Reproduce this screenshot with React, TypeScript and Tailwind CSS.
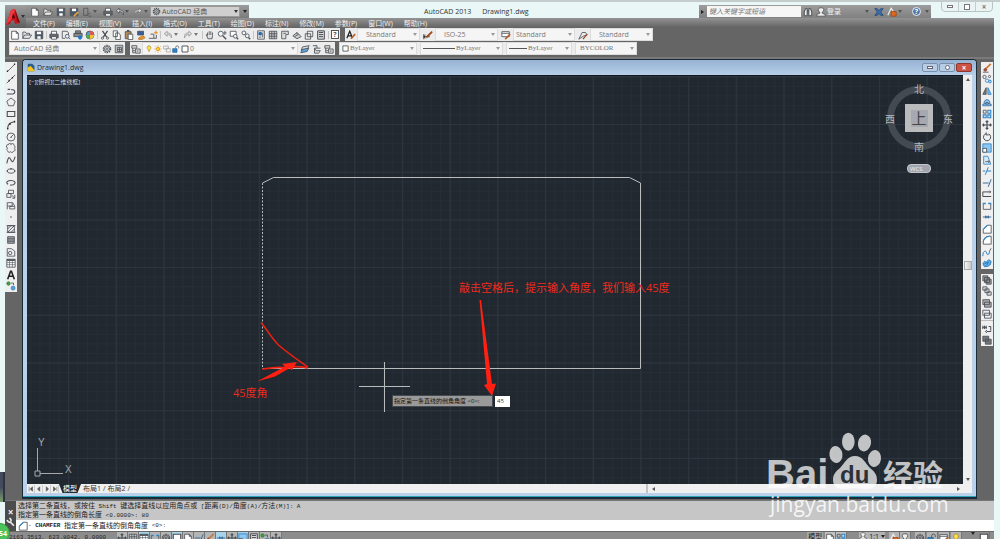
import type { ReactNode } from "react";
import clsx from "clsx";

// Every glyph is drawn on a 12x12 grid and inherits the stroke of <Glyph>.
const GLYPHS: Record<string, ReactNode> = {
  new: <path d="M2 1.5h5.5L10 4v7H2zM7.5 1.5V4H10" fill="#fff" />,
  open: <path d="M1 10V2.5h3l1 1.5h4v2M1 10l2-4h8.500l-2.500 4z" fill="#e8e8e8" />,
  save: (
    <>
      <path d="M1.500 1.500h9v9h-9z" fill="#4b5868" />
      <path d="M3.500 2h5v3h-5zM4 7.500h4v3H4z" fill="#fff" stroke="none" />
    </>
  ),
  saveas: (
    <>
      <path d="M1.500 1.500h9v9h-9z" fill="#4b5868" />
      <path d="M3.500 2h5v3h-5z" fill="#fff" stroke="none" />
      <path d="M6 11l5-5" stroke="#e8a33a" strokeWidth="2" />
    </>
  ),
  export: <path d="M2 1.500h5V10H2zM6 10l4-3M8 11h3" />,
  print: (
    <>
      <path d="M1 5h10v4.500H1z" fill="#666" />
      <path d="M3 1.500h6V5H3zM3 8h6v3H3z" fill="#fff" />
    </>
  ),
  preview: (
    <>
      <path d="M1.500 1.500h6l1.500 2V6M1.500 1.500V10H5" />
      <circle cx="7.500" cy="7.500" r="2.300" fill="#dfefff" />
      <path d="M9 9l2 2" />
    </>
  ),
  publish: (
    <>
      <path d="M3 1h6v3H3zM1 4h10v4H1z" fill="#888" />
      <circle cx="8.500" cy="9" r="2" fill="#1976d2" stroke="#1976d2" />
    </>
  ),
  globe: (
    <>
      <circle cx="6" cy="6" r="4.800" fill="#4aa3d8" />
      <path d="M6 6V1.200A4.800 4.800 0 0 1 10.800 6z" fill="#e2574c" stroke="none" />
      <path d="M6 6h4.800A4.800 4.800 0 0 1 6 10.800z" fill="#f2c037" stroke="none" />
      <path d="M6 6v4.800A4.800 4.800 0 0 1 1.200 6z" fill="#58a84c" stroke="none" />
    </>
  ),
  cut: (
    <>
      <path d="M3 1l5 7.500M9 1L4 8.500" strokeWidth="1.500" />
      <circle cx="3" cy="9.700" r="1.300" />
      <circle cx="9" cy="9.700" r="1.300" />
    </>
  ),
  copy: <path d="M1.500 1h5v7h-5zM4.500 3.500H8L10 6v5.500H4.500z" fill="#fff" />,
  paste: (
    <>
      <path d="M1.500 2h7v8.500h-7z" fill="#b58a5c" />
      <path d="M5 5h5.500v6.500H5z" fill="#fff" />
      <path d="M3.500 1h3" strokeWidth="2" />
    </>
  ),
  match: (
    <>
      <path d="M2 1.500h7V6H2z" fill="#3b5f9c" />
      <path d="M3 11c0-3 3-2 5-4l3 2c-2 2-5 3-8 2z" fill="#e29a3a" stroke="#b87020" />
    </>
  ),
  block: (
    <>
      <path d="M1 10h6V5H3M7 10h3V6" />
      <path d="M9.500 1v4M7.500 3h4" stroke="#f09020" strokeWidth="1.500" />
    </>
  ),
  undo: <path d="M5 1.500L1.500 4.500 5 7.500V5.500c3 0 4.500 1 5 4 1-4-1-6-5-6z" fill="#ddd" />,
  redo: <path d="M7 1.500l3.500 3L7 7.500V5.500c-3 0-4.500 1-5 4-1-4 1-6 5-6z" fill="#ddd" />,
  pan: <path d="M3 6.500V3M5 6V1.500M7 6V1.500M9 6.500V3M3 6.500L1.500 5.500 3.500 10.500h5L9 6.500" fill="#ddd" />,
  zoom: (
    <>
      <circle cx="4.500" cy="4.500" r="3" fill="#eef5fb" />
      <path d="M7 7l4 4" strokeWidth="1.600" />
      <path d="M9.500 1v5M7.500 3.500h4" />
    </>
  ),
  zoomwin: (
    <>
      <path d="M1.500 1.500h7v6h-7z" fill="#fff" />
      <circle cx="7.500" cy="7.500" r="2.200" fill="#eef5fb" />
      <path d="M9 9l2 2" strokeWidth="1.600" />
    </>
  ),
  zoomprev: (
    <>
      <circle cx="3.500" cy="3.500" r="2.300" fill="#eef5fb" />
      <circle cx="7.500" cy="7" r="2.300" fill="#eef5fb" />
      <path d="M9 9l2 2" strokeWidth="1.600" />
    </>
  ),
  props: (
    <>
      <path d="M2 1h8v10H2z" fill="#eee" />
      <path d="M3.500 3h3v3h-3z" fill="#2b67ad" stroke="#2b67ad" />
      <path d="M8 3v6M3.500 8.500h3" />
    </>
  ),
  palette: <path d="M1.500 1.500h9v9h-9zM1.500 4.500h9M1.500 7.500h9M4.500 1.500v9M7.500 1.500v9" fill="#ccc" />,
  tool: <path d="M2 1.500h8v4H7v5H4M2 1.500v9h2M4 4h3" fill="#ddd" />,
  sheet: <path d="M1 7l5-4 5 5-5 2.500zM3 8l5-3M6 3v2" fill="#ccc" />,
  markup: <path d="M4 1.500h6.500V8H4zM1.500 4.500h6.500V11H1.500z" fill="#eee" />,
  calc: <path d="M2 1h8v10H2zM3.500 3h5M3.500 5.500h5M3.500 8h5" fill="#ddd" strokeWidth="1.200" />,
  gear: (
    <>
      <circle cx="6" cy="6" r="4.300" strokeWidth="1.600" strokeDasharray="1.700 1" />
      <circle cx="6" cy="6" r="3" />
      <circle cx="6" cy="6" r="1.200" />
    </>
  ),
  wsave: <path d="M1.500 1.500h9v9h-9zM4 4h5v5H4zM4 6.500h5M6.500 4v5" fill="#ccc" />,
  layers: <path d="M1 2h6v3H1zM2 5v3h3M2 8v2.500h3M5.500 6h5.500v5H5.500zM7 8.500h2" fill="#ddd" />,
  bulb: <path d="M6 1a3 3 0 0 0-1.500 5.500V8h3V6.500A3 3 0 0 0 6 1zM5 10h2" fill="#ffe14d" stroke="#a98a20" />,
  sun: (
    <>
      <circle cx="6" cy="6" r="2.500" fill="#ffd12e" stroke="#d28b10" />
      <path d="M6 .5v2M6 9.500v2M.5 6h2M9.500 6h2M2 2l1.500 1.500M8.500 8.500L10 10M10 2L8.500 3.500M2 10l1.500-1.500" stroke="#d28b10" />
    </>
  ),
  vpfreeze: <path d="M1 1.500h7V6H1zM5 5h6v5.500H5z" stroke="#999" />,
  lock: (
    <>
      <path d="M1 5.500h6.500V11H1z" fill="#2f83c6" stroke="#245f92" />
      <path d="M5.500 5V3.500a2 2 0 0 1 4.500 0V5" />
    </>
  ),
  swatch: <path d="M1.500 1.500h9v9h-9z" fill="#fff" strokeWidth="1.400" />,
  stack: (
    <>
      <path d="M3 3.500L11 2 9 6 1.500 7.500z" fill="#ddd" />
      <path d="M2.500 6.500L10.500 5l-2 4L1 10.500z" fill="#5aa5dd" />
    </>
  ),
  layprev: <path d="M1 2h5v3M3 5h7M3 5v6h5l2-3H5z" fill="#ddd" />,
  astyle: (
    <>
      <path d="M1 10L4.500 1.500 7.500 9M2.300 7h4" strokeWidth="1.500" stroke="#222" />
      <path d="M6 10.500L11 5" stroke="#b5612a" strokeWidth="2" />
    </>
  ),
  dim: (
    <>
      <path d="M1 5v6M1 8h7M3 6L1 8l2 2" stroke="#222" />
      <path d="M4 9l7-7" stroke="#9b4b22" strokeWidth="2.200" />
    </>
  ),
  tstyle: (
    <>
      <path d="M1 2h9v6H1zM1 4h9" fill="#fff" />
      <path d="M5 11l6-6" stroke="#b5612a" strokeWidth="2" />
    </>
  ),
  mleader: (
    <>
      <path d="M1 11l4-8h4l2 3-4 1z" fill="#eee" />
      <path d="M6 11l5-6" stroke="#9b4b22" strokeWidth="1.600" />
    </>
  ),
  line: (
    <>
      <path d="M2 10L10 2" />
      <path d="M1 10h1.500M9.500 1.500H11" strokeWidth="1.800" stroke="#222" />
    </>
  ),
  xline: (
    <>
      <path d="M1 11L11 1" />
      <path d="M3 8h1.500M7 4.500h1.500" strokeWidth="2" stroke="#222" />
    </>
  ),
  pline: <path d="M1 9.500h7a2.500 2.500 0 0 0 0-5H6M2 4h3" strokeWidth="1.300" />,
  polygon: <path d="M6 1.200l5 3.800-2 5.500H3L1 5z" />,
  rect: <path d="M1.500 3h9v6h-9zM.8 9h1.500M9.800 3h1.500" strokeWidth="1.300" />,
  arc: (
    <>
      <path d="M2 10.500C2 5.500 5 2.500 10 2" strokeWidth="1.300" />
      <path d="M1.300 10.500h1.500M4 5h1.500M9.500 2H11" strokeWidth="2" stroke="#222" />
    </>
  ),
  circle: (
    <>
      <circle cx="6" cy="6" r="4.800" />
      <path d="M6 6l3-3M5 6.500h2" />
    </>
  ),
  cloud: <path d="M3 2a1.500 1.500 0 0 1 3 0 1.700 1.700 0 0 1 3.500.8 2 2 0 0 1 .5 3.500 2 2 0 0 1-1 3.700 2 2 0 0 1-3.500.5A2 2 0 0 1 2 9.500 2 2 0 0 1 2 6 2 2 0 0 1 3 2z" />,
  spline: <path d="M1 10c2-10 3.500-7 5-4s3 3 5-4" strokeWidth="1.300" />,
  ellipse: (
    <>
      <ellipse cx="6" cy="6" rx="4.500" ry="2.700" />
      <path d="M5.300 3.300h1.500M.8 6h1.500M9.800 6h1.500" strokeWidth="2" />
    </>
  ),
  elarc: <path d="M2.500 7.500C-1 5 2 3 6 3s7 2.500 3 5l-3 .5M5 8.500h1.500" strokeWidth="1.300" />,
  insert: <path d="M3 1.500h6v4H3zM1 5.500h5V10H1zM7 7.500L10.500 11M10.500 7v4h-3" fill="#eee" />,
  make: <path d="M1.500 2h6v4h-6zM1.500 6v4M4.500 6.500h6v3h-6zM8 2l2.500 4" />,
  point: <circle cx="6" cy="6" r=".8" fill="#333" stroke="none" />,
  hatch: <path d="M2 2h8v8H2zM2 6l4-4M2 10l8-8M6 10l4-4M.8 2h10.500M.8 10h10.500" />,
  gradient: (
    <>
      <path d="M2 2h8v8H2z" fill="#b0b0b0" />
      <path d="M2 4h8M2 6h8M2 8h8" />
    </>
  ),
  region: (
    <>
      <path d="M1.500 2h5l4 3v6h-9z" />
      <circle cx="5" cy="7.200" r="2" />
    </>
  ),
  table: (
    <>
      <path d="M1 1.500h10v9.500H1z" fill="#fff" />
      <path d="M1 2.500h10" strokeWidth="2" />
      <path d="M1 5.500h10M1 8h10M4.300 3v8M7.700 3v8" strokeWidth=".7" />
    </>
  ),
  mtext: <path d="M2 11L5.500 1.500h1L10 11M3.500 7.500h5" strokeWidth="1.900" stroke="#222" />,
  addsel: (
    <>
      <circle cx="3" cy="3" r="2" fill="#48a148" stroke="#2f7a2f" />
      <circle cx="8.500" cy="8.500" r="2.300" fill="#5aa5dd" stroke="#2b77b5" />
      <path d="M6 2.500h3V5" />
    </>
  ),
  erase: (
    <>
      <path d="M5 6.500L10.500 1" stroke="#c57a35" strokeWidth="2" />
      <path d="M2 8.500l2-2.500 2 2-2 2z" fill="#d34a32" stroke="#7b2c1e" />
      <path d="M1 11h7" />
    </>
  ),
  mcopy: (
    <>
      <circle cx="3" cy="3.500" r="2" />
      <circle cx="9" cy="3" r="1.300" />
      <circle cx="6" cy="8" r="2" stroke="#2f83c6" />
      <circle cx="9.500" cy="9" r="1.700" stroke="#2f83c6" fill="#a5d3f5" />
    </>
  ),
  mirror: (
    <>
      <path d="M5 2v8H1z" fill="#777" />
      <path d="M7 2v8h4z" fill="#7ebcec" stroke="#2f83c6" />
    </>
  ),
  offset: (
    <>
      <path d="M1 10.500h10V8.500H9a3.500 3.500 0 1 0-6 0H1z" fill="#8cc6f1" stroke="#2f6fa8" />
      <path d="M4 8.500h4a2 2 0 1 0-4 0z" />
    </>
  ),
  array: (
    <>
      <path d="M1.500 1.500h3.500v3.500H1.500z" />
      <path d="M7 1.500h3.500v3.500H7zM1.500 7h3.500v3.500H1.500zM7 7h3.500v3.500H7z" stroke="#2f83c6" fill="#cfe6f8" strokeWidth="1.300" />
    </>
  ),
  move: <path d="M6 1v10M1 6h10M4.500 2.500L6 1l1.500 1.500M4.500 9.500L6 11l1.500-1.500M2.500 4.500L1 6l1.500 1.500M9.500 4.500L11 6 9.500 7.500" strokeWidth="1.400" />,
  rotate: <path d="M5 2a4.300 4.300 0 1 0 3 .3M5 .5v3H8" strokeWidth="1.200" />,
  scale: (
    <>
      <path d="M1 1h10v10H1z" fill="#8cc6f1" stroke="#2f83c6" />
      <path d="M1 6.500h4.500V11H1z" fill="#fff" />
    </>
  ),
  stretch: (
    <>
      <path d="M2 1.500h5l3.500 9.500H2z" fill="#d5eafa" stroke="#2f83c6" />
      <path d="M4 8h5M7.500 6.500L9 8 7.500 9.500" />
    </>
  ),
  trim: <path d="M1 6h3M6 6h5M4 10.500L7.500 1.500" stroke="#2f83c6" strokeWidth="1.200" />,
  extend: <path d="M1 6h7M11 1.500L7.500 10.500" stroke="#3b6f9c" strokeWidth="1.200" />,
  breakpt: <path d="M1 3.500h8.500M1 3.500v5.500h10M9 2l1.500 1.500L9 5" strokeWidth="1.200" />,
  breaks: (
    <>
      <path d="M1.500 3v7h9V3" />
      <path d="M1 3h3.500M7.500 3H11" stroke="#2f83c6" strokeWidth="1.800" />
    </>
  ),
  join: <path d="M1 6h4M11 6H7M4 4.500L5.500 6 4 7.500M8 4.500L6.500 6 8 7.500" stroke="#3b6f9c" strokeWidth="1.300" />,
  chamfer: (
    <>
      <path d="M1.500 11V6.500l5-5H11V11z" fill="#fff" />
      <path d="M1.500 6.500l5-5" stroke="#2f83c6" strokeWidth="1.300" />
    </>
  ),
  fillet: (
    <>
      <path d="M1.500 11V9c0-4 3-7.500 7.500-7.500h2V11z" fill="#fff" />
      <path d="M1.500 9c0-4 3-7.500 7.500-7.500" stroke="#2f83c6" strokeWidth="1.300" />
    </>
  ),
  blend: (
    <>
      <path d="M1 11c0-4 1-6 3-6s1 4 3 4 2-3 2-4" stroke="#2f83c6" strokeWidth="1.200" />
      <path d="M9 5l2-3.500" />
    </>
  ),
  explode: <path d="M1 7l2-3 2 1 3-3 3 2-1 4-3 2-4 .5z M3 7l5-2M5 9l3-4" fill="#5db0ec" stroke="#2672ad" />,
  front: <path d="M1 1h6v6H1zM5 5h6v6H5zM3 3h6v6H3z" fill="#999" />,
  back: <path d="M1 1h5v4H1zM6 7h5v4H6zM3.500 3.500h5v4.500h-5z" fill="#ddd" />,
  above: <path d="M1 2h8v6H1zM3 5h8v6H3z" fill="#aaa" />,
  under: <path d="M3 5h8v6H3zM1 1.500h8v6H1z" fill="#eee" />,
  text2f: <path d="M1 2v4M3 2v4M5 2v4M1 4h5M8 3h2.500v5M6 9h5M4 9l2-1.500M4 9l2 1.500" strokeWidth="1.200" />,
  hatchb: <path d="M1 1.500h7v6H1zM4 5h7v6H4z" fill="#777" />,
  bino: <path d="M1.500 10.500V6L3 2h2v8.500zM7 10.500V2h2L10.500 6v4.500zM5 5h2" fill="#eee" strokeWidth="1.200" />,
  person: <path d="M6 1a2.500 2.500 0 0 0-1.500 5v1.500L1 9v2h10V9L7.500 7.500V6A2.500 2.500 0 0 0 6 1z" fill="#eee" />,
  exchange: <path d="M1 2h3l2 2.500L8 2h3L8 6l3 4H8L6 7.500 4 10H1l3-4z" fill="#3e6ea8" stroke="#234b7c" />,
  alert: (
    <>
      <path d="M1 10L5 1.500 8 6" stroke="#eee" strokeWidth="1.400" />
      <path d="M5 5.500h6V11H5z" fill="#e06a1d" stroke="#a34610" />
    </>
  ),
  wrench: <path d="M1.500 3.500A2.800 2.800 0 0 0 5 6l4.500 4.500M4 1.500A2.800 2.800 0 0 1 6 5" stroke="#eee" strokeWidth="2" />,
};

function Glyph({ name, className = "size-[10px]", stroke = "#4a4f55" }: { name: string; className?: string; stroke?: string }) {
  return (
    <svg viewBox="0 0 12 12" className={clsx("shrink-0", className)} fill="none" stroke={stroke} strokeWidth="1" aria-hidden="true">
      {GLYPHS[name]}
    </svg>
  );
}

function Tool({ name, className = "w-3", stroke }: { name: string; className?: string; stroke?: string }) {
  return (
    <button aria-label={name} className={clsx("flex items-center justify-center shrink-0", className)}>
      <Glyph name={name} stroke={stroke} />
    </button>
  );
}

function Caret({ className = "border-t-[#777]" }: { className?: string }) {
  return <span className={clsx("shrink-0 h-0 w-0 border-x-2 border-t-[3px] border-x-transparent", className)} />;
}

function Sep() {
  return <span className="mx-px h-2 w-px shrink-0 bg-[#c4c4c4]" />;
}

function Combo({ label, value, className, before }: { label: string; value: string; className: string; before?: ReactNode }) {
  return (
    <label className={clsx("flex h-full shrink-0 items-center gap-px border border-[#dcdcdc] bg-[#f5f5f5] pr-0.5 text-[#777]", className)}>
      {before}
      <select aria-label={label} className="min-w-0 flex-1 appearance-none bg-transparent outline-none">
        <option>{value}</option>
      </select>
      <Caret className="border-t-[#999]" />
    </label>
  );
}

const MENUS = ["文件(F)", "编辑(E)", "视图(V)", "插入(I)", "格式(O)", "工具(T)", "绘图(D)", "标注(N)", "修改(M)", "参数(P)", "窗口(W)", "帮助(H)"];

const STANDARD = [
  ["new", "open", "save"],
  ["print", "preview", "publish", "globe"],
  ["cut", "copy", "paste", "match", "block"],
];
const VIEW_TOOLS = [
  ["pan", "zoom", "zoomwin", "zoomprev"],
  ["props", "palette", "tool", "sheet", "markup", "calc"],
];

const DRAW = [
  "line", "xline", "pline", "polygon", "rect", "arc", "circle", "cloud", "spline", "ellipse",
  "elarc", "insert", "make", "point", "hatch", "gradient", "region", "table", "mtext", "addsel",
];
const MODIFY = [
  "erase", "mcopy", "mirror", "offset", "array", "move", "rotate", "scale", "stretch",
  "trim", "extend", "breakpt", "breaks", "join", "chamfer", "fillet", "blend", "explode",
];

function TitleBar() {
  return (
    <div className="flex h-[13px] items-stretch">
      <div className="flex w-[223px] shrink-0 items-center bg-linear-to-b from-[#9b9b9b] to-[#7b7b7b] pl-0.5">
        {["new", "open", "save", "saveas", "export"].map((n) => <Tool key={n} name={n} className="w-[13px]" stroke="#555" />)}
        <Caret className="border-t-[#555]" />
        <Tool name="print" className="ml-1 w-[13px]" />
        <Tool name="undo" className="w-[11px]" />
        <Caret className="border-t-[#555]" />
        <Tool name="redo" className="ml-0.5 w-[13px]" stroke="#777" />
        <Caret className="border-t-[#555]" />
        <label className="ml-0.5 mr-[3px] flex h-[11px] flex-1 items-center gap-px border border-[#999] bg-[#cfcfcf] px-px text-[#555]">
          <Glyph name="gear" className="size-[9px]" />
          <select aria-label="工作空间" className="min-w-0 flex-1 appearance-none bg-transparent outline-none">
            <option>AutoCAD 经典</option>
          </select>
          <Caret className="border-t-[#333]" />
        </label>
        <Caret className="mr-0.5 border-t-[#222]" />
      </div>
      <h1 className="flex flex-1 items-center gap-[11px] pl-[175px] text-[#333] leading-none">
        <span>AutoCAD 2013</span>
        <span>Drawing1.dwg</span>
      </h1>
      <div className="flex w-[232px] shrink-0 items-center bg-linear-to-b from-[#9d9d9d] to-[#808080] pr-0.5">
        <span className="ml-0.5 mr-[3px] h-0 w-0 border-y-2 border-l-[3px] border-y-transparent border-l-[#222]" />
        <input aria-label="搜索" placeholder="键入关键字或短语" className="h-[11px] w-[94px] bg-[#f6f6f6] px-0.5 italic outline-none placeholder:text-[#777]" />
        <Tool name="bino" className="w-[13px]" />
        <Tool name="person" className="w-[13px]" stroke="#555" />
        <button className="text-[#f2f2f2]">登录</button>
        <span className="flex-1" />
        <Caret className="border-t-[#555]" />
        <Tool name="exchange" className="ml-1 w-3" />
        <Tool name="alert" className="w-[13px]" />
        <Caret className="border-t-[#555]" />
        <button aria-label="帮助" className="ml-2.5 mr-1 flex size-[9px] items-center justify-center rounded-full border border-[#eee] bg-[#4d78a8] font-bold text-white leading-none">?</button>
        <Caret className="border-t-[#555]" />
      </div>
      <div className="-mt-1 ml-2.5 mr-px flex h-[11px] w-[52px] shrink-0 rounded-b border border-[#b8c4c4] bg-[#eaf4f4]">
        <button aria-label="最小化" className="flex flex-1 items-center justify-center border-r border-[#c2cccc]">
          <span className="h-[3px] w-1.5 border border-[#777] bg-white" />
        </button>
        <button aria-label="最大化" className="flex flex-1 items-center justify-center border-r border-[#c2cccc]">
          <span className="size-1.5 border border-[#777] bg-white" />
        </button>
        <button aria-label="关闭" className="flex-1 text-[8px] font-bold leading-none text-[#777]">×</button>
      </div>
    </div>
  );
}

function Toolbars() {
  const bar = "flex h-[13px] items-center bg-[#ececec]";
  return (
    <div className="flex flex-col gap-px bg-[#656565] pb-0.5 text-[#555]">
      <div className="flex gap-[5px] pl-1">
        <div className={bar}>
          {STANDARD.map((group, i) => (
            <div key={i} className="flex items-center">
              {group.map((n) => <Tool key={n} name={n} />)}
              <Sep />
            </div>
          ))}
          <Tool name="undo" stroke="#999" />
          <Caret />
          <Tool name="redo" className="ml-1 w-3" stroke="#999" />
          <Caret />
          <span className="w-[3px]" />
          {VIEW_TOOLS.map((group, i) => (
            <div key={i} className="flex items-center">
              <Sep />
              {group.map((n) => <Tool key={n} name={n} />)}
            </div>
          ))}
          <Sep />
          <button aria-label="帮助" className="mx-px flex h-[9px] w-2 items-center justify-center border border-[#555] bg-white font-bold leading-none">?</button>
        </div>
        <div className={bar}>
          <Tool name="astyle" />
          <Combo label="文字样式" value="Standard" className="w-[63px] pl-2" />
          <Tool name="dim" className="w-[15px]" />
          <Combo label="标注样式" value="ISO-25" className="w-[63px] pl-2" />
          <Tool name="tstyle" className="w-[15px]" />
          <Combo label="表格样式" value="Standard" className="w-[62px] pl-0.5" />
          <Tool name="mleader" className="w-[15px]" />
          <Combo label="多重引线样式" value="Standard" className="w-[63px] pl-2" />
        </div>
      </div>
      <div className="flex gap-1 pl-1">
        <div className={clsx(bar, "mr-px")}>
          <Combo label="工作空间" value="AutoCAD 经典" className="w-[91px] pl-1" />
          <Tool name="gear" className="w-[13px]" />
          <Tool name="wsave" />
        </div>
        <div className={bar}>
          <Tool name="layers" />
          <Combo
            label="图层"
            value="0"
            className="w-[156px] pl-0.5"
            before={["bulb", "sun", "vpfreeze", "lock", "swatch"].map((n) => <Glyph key={n} name={n} className="size-2" />)}
          />
          <Tool name="stack" className="w-[13px]" />
          <Tool name="layprev" />
          <Tool name="layers" />
        </div>
        <div className={clsx(bar, "gap-[3px] font-['Liberation_Serif','Noto_Sans_CJK_SC',serif]")}>
          <Combo label="颜色" value="ByLayer" className="w-[78px] pl-0.5" before={<Glyph name="swatch" className="size-[7px]" />} />
          <Combo label="线型" value="ByLayer" className="w-[83px] pl-0.5" before={<span className="h-px w-8 bg-[#555]" />} />
          <Combo label="线宽" value="ByLayer" className="w-[66px] pl-0.5" before={<span className="h-px w-[18px] bg-[#555]" />} />
          <Combo label="打印样式" value="BYCOLOR" className="w-[62px] pl-1" />
        </div>
      </div>
    </div>
  );
}

function Strip({ names, className }: { names: string[]; className: string }) {
  return (
    <div className={clsx("flex w-3 flex-col bg-[#efefef]", className)}>
      {names.map((n) => <Tool key={n} name={n} className="w-3 min-h-0 flex-1" />)}
    </div>
  );
}

function Drawing() {
  return (
    <svg className="absolute inset-0 h-full w-full" aria-label="模型空间">
      <defs>
        <pattern id="minor" width="9.540" height="9.540" x="41" y="48" patternUnits="userSpaceOnUse">
          <path d="M.5 0v9.540M0 .5h9.540" stroke="#252d36" strokeWidth="1" />
        </pattern>
        <pattern id="major" width="47.700" height="47.700" x="41" y="48" patternUnits="userSpaceOnUse">
          <path d="M.5 0v47.700M0 .5h47.700" stroke="#2d3640" strokeWidth="1" />
        </pattern>
      </defs>
      <rect width="100%" height="100%" fill="url(#minor)" />
      <rect width="100%" height="100%" fill="url(#major)" />
      <g fill="none" stroke="#b9bcbf" strokeWidth="1">
        <path d="M235.500 292.500H613.500V107L602.500 101.500H246.500L235.500 107" />
        <path d="M235.500 107V292" strokeDasharray="2 1.500" />
        <path d="M332 310.500h51M357.500 286v50" />
        <path d="M10.500 395V372M13 397.500h23M8 395h5v5H8z" stroke="#a5a9ad" />
      </g>
      <g fill="none" stroke="#f01f10" strokeWidth="1.600" strokeLinecap="round" strokeLinejoin="round">
        <path d="M234.500 247c5 6 10 15 17 22 8 7 18 14 29 22" />
        <path d="M236 293c6-1 12-2 20-1.500 9-1 16-2 24 .5" />
      </g>
      <g fill="#ff2012">
        <path d="M230 305.500l28-15-3-2.500 15-2-5 8-3-1.500-14 8z" />
        <path d="M452.500 224l1.500 0 11 84 4-.5-4 12.500-8-11 3-1z" />
      </g>
      <g fill="#a5a9ad" className="font-['Liberation_Sans',sans-serif] text-[10px]">
        <text x="11" y="370">Y</text>
        <text x="38" y="397">X</text>
      </g>
    </svg>
  );
}

function Compass() {
  const mark = "absolute leading-none";
  return (
    <div className="absolute right-2.5 top-2 size-[68px] text-[10px] text-[#b4b7ba]">
      <div className="absolute inset-[2px] rounded-full border-[7px] border-[#444a52]" />
      <button className="absolute inset-[20px] flex items-center justify-center bg-[#b9bbbc]">
        <span className="flex size-[17px] items-center justify-center bg-[#a6a9af] text-[15px] leading-none text-[#444]">上</span>
      </button>
      <span className={clsx(mark, "left-[29px] top-0")}>北</span>
      <span className={clsx(mark, "left-0 top-[30px]")}>西</span>
      <span className={clsx(mark, "right-0 top-[30px]")}>东</span>
      <span className={clsx(mark, "bottom-0 left-[29px]")}>南</span>
      <button className="absolute left-[22px] top-20 flex h-[9px] w-6 items-center rounded-sm border border-[#c4c5ce] bg-[#a2a4ae] pl-0.5 text-[6px] leading-none text-[#eee]">WCS</button>
    </div>
  );
}

const SHEET_ARROWS = [
  { label: "第一个", d: "M1.500 1v6M6 1v6L3 4z" },
  { label: "上一个", d: "M5 1v6L2 4z" },
  { label: "下一个", d: "M3 1v6l3-3z" },
  { label: "最后一个", d: "M6.500 1v6M2 1v6l3-3z" },
];

function DocumentWindow() {
  return (
    <section className="flex min-w-0 flex-1 flex-col rounded-t border border-[#1b2b38] border-b-2 bg-[#b9d1ea]">
      <header className="flex h-[15px] shrink-0 items-center rounded-t bg-linear-to-b from-[#96b2d3] to-[#b6cee8] pl-1 pr-1">
        <svg viewBox="0 0 12 12" className="size-[9px]" aria-hidden="true">
          <path d="M1 1h6l3 3v7H1z" fill="#2e5f86" />
          <path d="M1 11V6l4-2 6 7z" fill="#f7c51e" />
        </svg>
        <h2 className="ml-px flex-1 text-[#1c2c40]">Drawing1.dwg</h2>
        <div className="flex gap-px">
          <button aria-label="最小化" className="flex h-[9px] w-4 items-center justify-center rounded-xs border border-[#7890ab] bg-[#b8cde3]">
            <span className="h-[3px] w-1.5 border border-[#667] bg-white" />
          </button>
          <button aria-label="还原" className="flex h-[9px] w-4 items-center justify-center rounded-xs border border-[#7890ab] bg-[#b8cde3]">
            <span className="size-[5px] rounded-full border border-[#667] bg-white" />
          </button>
          <button aria-label="关闭" className="flex h-[9px] w-4 items-center justify-center rounded-xs border border-[#8c3a30] bg-[#cf5342] text-[8px] font-bold leading-none text-white">×</button>
        </div>
      </header>
      <div className="mx-1 mb-[3px] flex min-h-0 flex-1 flex-col">
        <div className="flex min-h-0 flex-1">
          <div className="relative min-w-0 flex-1 overflow-hidden border-t border-[#14181d] bg-[#212830]">
            <Drawing />
            <p className="absolute left-0.5 top-[3px] text-[6px] leading-none text-[#d8dadc]">[−][俯视][二维线框]</p>
            <Compass />
            <p className="absolute left-[432px] top-[204px] whitespace-nowrap text-[11px] leading-4 text-[#f02a1c]">敲击空格后，提示输入角度，我们输入45度</p>
            <p className="absolute left-[206px] top-[309px] whitespace-nowrap text-[11px] leading-4 text-[#f02a1c]">45度角</p>
            <div className="absolute left-[365px] top-[319px] flex items-center gap-0.5 text-[6px] leading-none">
              <label htmlFor="angle" className="flex h-3 w-[101px] items-center whitespace-nowrap border border-[#444a50] bg-[#9a9a9a] px-px text-[#111]">
                指定第一条直线的倒角角度 &lt;0&gt;:
              </label>
              <input id="angle" defaultValue="45" className="h-[11px] w-[15px] bg-white px-0.5 text-[#333] outline-none" />
            </div>
          </div>
          <div className="flex w-[9px] shrink-0 flex-col items-center justify-between bg-[#efefef] py-[3px]">
            <span className="h-0 w-0 border-x-2 border-b-[3px] border-x-transparent border-b-[#555]" />
            <span className="mb-7 h-[9px] w-2 border border-[#aaa] bg-linear-to-r from-[#f4f4f4] to-[#c8c8c8]" />
            <Caret className="border-t-[#555]" />
          </div>
        </div>
        <div className="flex h-[9px] shrink-0 items-center bg-[#f0f0f0] leading-none text-[#333]">
          {SHEET_ARROWS.map((a) => (
            <button key={a.label} aria-label={a.label} className="flex h-2 w-[8px] shrink-0 items-center justify-center border-r border-[#ccc]">
              <svg viewBox="0 0 8 8" className="size-1.5" fill="#555" stroke="#555" strokeWidth=".8" aria-hidden="true">
                <path d={a.d} />
              </svg>
            </button>
          ))}
          <button className="h-full w-[22px] bg-[#212830] text-white leading-none [clip-path:polygon(0_0,100%_0,84%_100%,16%_100%)]">模型</button>
          <button className="px-0.5">布局1</button>
          <span>/</span>
          <button className="px-0.5">布局2</button>
          <span className="flex-1">/</span>
          <div className="flex h-full w-[326px] shrink-0 items-center justify-between border-l-2 border-[#c4c4c4] pl-1 pr-3">
            <span className="h-0 w-0 border-y-2 border-r-[3px] border-y-transparent border-r-[#555]" />
            <span className="h-0 w-0 border-y-2 border-l-[3px] border-y-transparent border-l-[#555]" />
          </div>
        </div>
      </div>
      <div className="h-px bg-[#2ba3bd]" />
    </section>
  );
}

function Mono({ children }: { children: ReactNode }) {
  return <span className="whitespace-pre font-['Liberation_Mono',monospace] text-[6px]">{children}</span>;
}

function CommandLine() {
  return (
    <div className="flex h-[31px] shrink-0 border-t border-[#777]">
      <div className="flex w-[11px] shrink-0 flex-col items-center justify-between bg-[#4c4c4c] pb-1 pt-1.5">
        <button aria-label="关闭" className="text-[10px] font-bold leading-none text-[#eee]">×</button>
        <Tool name="wrench" className="w-[9px]" />
      </div>
      <div className="flex min-w-0 flex-1 flex-col text-[#222]">
        <div className="flex-1 bg-[#c6c6c6] px-0.5 pt-px leading-2">
          <p className="whitespace-nowrap">
            选择第二条直线，或按住<Mono> Shift </Mono>键选择直线以应用角点或<Mono> [</Mono>距离<Mono>(D)/</Mono>角度<Mono>(A)/</Mono>方法<Mono>(M)]: A</Mono>
          </p>
          <p className="whitespace-nowrap">指定第一条直线的倒角长度<Mono> &lt;0.0000&gt;: 80</Mono></p>
        </div>
        <label className="flex h-[11px] items-center whitespace-nowrap bg-white px-0.5 leading-none">
          <Glyph name="chamfer" />
          <Mono>- <b>CHAMFER</b> </Mono>指定第一条直线的倒角角度<Mono> &lt;0&gt;: </Mono>
          <input aria-label="命令" className="min-w-0 flex-1 outline-none" />
        </label>
      </div>
    </div>
  );
}

const TOGGLES = [
  { name: "move", on: false }, { name: "palette", on: false }, { name: "table", on: true },
  { name: "breaks", on: false }, { name: "gear", on: false }, { name: "swatch", on: true },
  { name: "new", on: false }, { name: "extend", on: false }, { name: "erase", on: false },
  { name: "join", on: true }, { name: "move", on: false }, { name: "scale", on: true },
  { name: "calc", on: false }, { name: "addsel", on: false }, { name: "move", on: false },
];

function StatusBar() {
  const cell = "flex h-3 w-[11px] shrink-0 items-center justify-center border-r border-[#777]";
  return (
    <footer className="flex h-2 shrink-0 items-start overflow-hidden border-t border-[#666] bg-[#8c8c8c] leading-none text-[#222]">
      <span className="w-[112px] shrink-0 pl-1 pt-px"><Mono>2163.3513, 623.8042, 0.0000</Mono></span>
      {TOGGLES.map((t, i) => (
        <button key={i} aria-label={t.name} className={clsx(cell, t.on ? "bg-[#a9d3e8]" : "bg-[#b4b4b4]")}>
          <Glyph name={t.name} />
        </button>
      ))}
      <span className="flex-1" />
      <button className="mr-0.5 h-2 bg-[#a8a8a8] px-px leading-none">模型</button>
      {["new", "array"].map((n) => <button key={n} aria-label={n} className={clsx(cell, "bg-[#c2c2c2]")}><Glyph name={n} /></button>)}
      <button className="ml-3 mr-1 flex h-2 items-center gap-0.5 bg-[#b4b4b4] leading-none"><Glyph name="person" className="size-2" />1:1<Caret className="border-t-[#222]" /></button>
      {["alert", "person"].map((n) => <button key={n} aria-label={n} className={clsx(cell, "bg-[#b4b4b4]")}><Glyph name={n} /></button>)}
      <span className="w-1" />
      {["gear", "lock", "tstyle", "bulb"].map((n) => <button key={n} aria-label={n} className={clsx(cell, "mr-px bg-[#b4b4b4]")}><Glyph name={n} /></button>)}
      <span className="ml-2 mt-1"><Caret className="border-t-[#222]" /></span>
      <button aria-label="全屏显示" className={clsx(cell, "mx-1")}><Glyph name="swatch" /></button>
    </footer>
  );
}

function Watermark() {
  return (
    <svg viewBox="0 0 184 92" className="pointer-events-none absolute bottom-4 right-[50px] w-[184px]" fill="#fff" fillOpacity="0.720">
      <text x="0" y="57" className="font-['Liberation_Sans',sans-serif] text-[40px] font-bold">Bai</text>
      <ellipse cx="70" cy="23.500" rx="6.500" ry="8.500" transform="rotate(-8 70 24)" />
      <ellipse cx="82.300" cy="10.700" rx="6.300" ry="9" />
      <ellipse cx="98.500" cy="12" rx="6.500" ry="8.500" transform="rotate(12 98.500 12)" />
      <ellipse cx="108.500" cy="27.500" rx="6.500" ry="8.500" transform="rotate(8 108.500 27.500)" />
      <path d="M89 25c-8 0-10 7-15 12-5 4-7 7-7 12 0 6 4 9 10 9 5 0 8-1 12-1s7 1 12 1c6 0 10-3 10-9 0-5-2-8-7-12-5-5-7-12-15-12z" />
      <text x="74" y="52" fill="#212830" fillOpacity="0.950" className="font-['Liberation_Sans',sans-serif] text-[24px] font-bold">du</text>
      <text x="117" y="55" className="font-['Noto_Sans_CJK_SC',sans-serif] text-[30px] font-bold">经验</text>
      <text x="4" y="81" fillOpacity="0.850" className="font-['Open_Sans',sans-serif] text-[21px]">jingyan.baidu.com</text>
    </svg>
  );
}

export default function App() {
  return (
    <div className="relative flex h-screen w-full flex-col overflow-hidden border-t-2 border-[#c4cccc] bg-[#e9f8f6] pl-[5px] pr-1.5 pt-[3px] font-['Open_Sans','Noto_Sans_CJK_SC',sans-serif] text-[7px] leading-none">
      <div className="flex shrink-0">
        <button aria-label="应用程序菜单" className="flex w-[21px] shrink-0 items-center bg-linear-to-b from-[#a0a0a0] to-[#5e5e5e]">
          <svg viewBox="0 0 16 20" className="h-5 w-4 shrink-0" aria-hidden="true">
            <path d="M1 18L6 3l4-1 5 14-5 1-1-4-3 1-1 3z" fill="#c8141c" />
            <path d="M6 3l4-1-1 5-3 6-5 5z" fill="#ee3b3f" />
            <path d="M10 2l5 14-3-2z" fill="#7f0a10" />
            <path d="M8 6l2 5-3 .5z" fill="#4c0508" />
          </svg>
          <Caret className="border-t-[#333]" />
        </button>
        <div className="min-w-0 flex-1">
          <TitleBar />
          <nav className="flex h-2.5 items-center gap-[11px] bg-linear-to-b from-[#939393] to-[#626262] pl-[7px] text-[#f2f2f2]">
            {MENUS.map((m) => <button key={m} className="shrink-0 leading-none">{m}</button>)}
          </nav>
        </div>
      </div>
      <Toolbars />
      <div className="flex min-h-0 flex-1 border-t-2 border-[#7a7a7a] bg-[#656565]">
        <div className="w-[17px] shrink-0 pt-[3px]">
          <Strip names={DRAW} className="h-[230px]" />
        </div>
        <div className="flex min-w-0 flex-1 pb-px">
          <DocumentWindow />
        </div>
        <div className="ml-1 w-[13px] shrink-0 pt-[3px]">
          <Strip names={MODIFY} className="h-[207px]" />
          <Strip names={["front", "back", "above", "under"]} className="mt-[5px] h-[46px]" />
          <Strip names={["text2f", "hatchb"]} className="h-[26px] border-t border-[#bbb] pt-0.5" />
        </div>
      </div>
      <CommandLine />
      <StatusBar />
      <Watermark />
      <span className="absolute bottom-[37px] left-0 h-[30px] w-[5px] border-r-2 border-[#2d3340] bg-linear-to-b from-[#444b5c] via-[#444b5c] to-[#7aa06a]" />
      <button className="absolute -bottom-1 -left-2.5 flex size-5 items-center justify-end rounded-full border border-[#2f9a3c] bg-[#4cc25a] pr-0.5 font-bold text-white">54</button>
    </div>
  );
}
